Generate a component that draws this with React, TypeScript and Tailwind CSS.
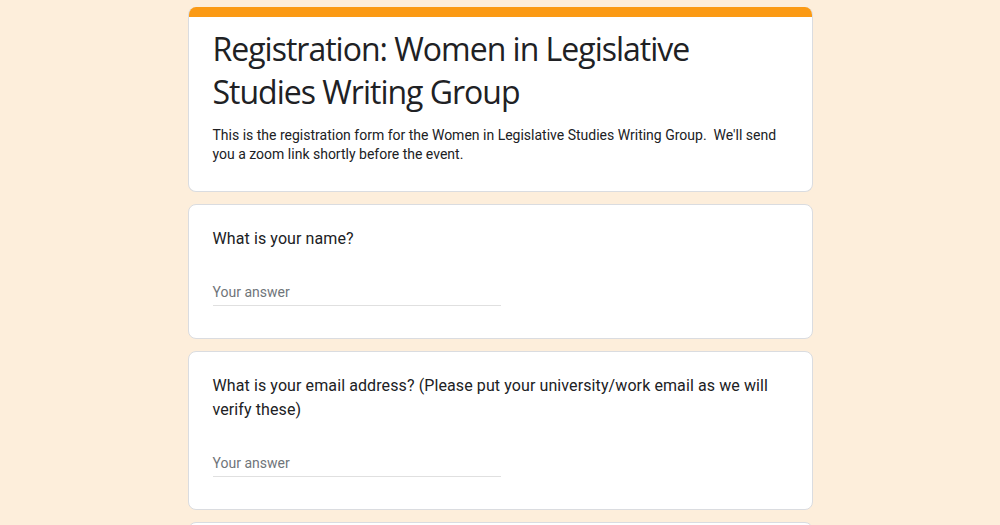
export default function App() {
  return (
    <div className="min-h-screen bg-[#fdeedb] flex justify-center pt-[7px] font-['Roboto',sans-serif]">
      <div className="w-[625px] flex flex-col gap-3">
        {/* Header card */}
        <div className="rounded-lg bg-white border border-[#dadce0] border-t-0 overflow-hidden">
          <div className="h-[10px] bg-[#fb9a14]" />
          <div className="px-6 pt-[10px] pb-[27px]">
            <h1 className="font-['Open_Sans',sans-serif] text-[32px] leading-[43px] text-[#202124] tracking-[-1px]">
              Registration: Women in Legislative Studies Writing Group
            </h1>
            <p className="mt-[13px] text-sm leading-[19px] text-[#202124]">
              This is the registration form for the Women in Legislative Studies Writing Group.&nbsp; We'll send
              you a zoom link shortly before the event.
            </p>
          </div>
        </div>

        {/* Question: name */}
        <div className="rounded-lg bg-white border border-[#dadce0] px-6 pt-[22px] pb-[32px]">
          <div className="text-base leading-6 text-[#202124] tracking-[0.1px]">What is your name?</div>
          <div className="mt-[31px] w-[288px] border-b border-[#e0e0e0] pb-[3px] text-sm leading-5 text-[#70757a]">
            Your answer
          </div>
        </div>

        {/* Question: email */}
        <div className="rounded-lg bg-white border border-[#dadce0] px-6 pt-[22px] pb-[32px]">
          <div className="text-base leading-6 text-[#202124] tracking-[0.1px]">
            What is your email address? (Please put your university/work email as we will verify these)
          </div>
          <div className="mt-[31px] w-[288px] border-b border-[#e0e0e0] pb-[3px] text-sm leading-5 text-[#70757a]">
            Your answer
          </div>
        </div>

        <div className="rounded-lg bg-white border border-[#dadce0] h-[120px]" />
      </div>
    </div>
  );
}
